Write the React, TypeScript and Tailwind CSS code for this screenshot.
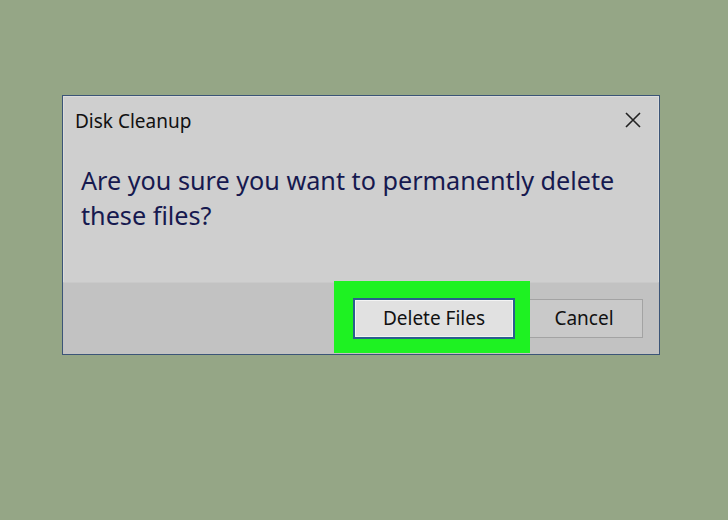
export default function App() {
  return (
    <div
      className="w-[728px] h-[520px] bg-[#95a686] pt-[95px] pl-[62px]"
      style={{ fontFamily: '"Noto Sans", "Open Sans", sans-serif' }}
    >
      <div className="w-[598px] h-[260px] border border-[#3c5577] bg-[#cfcfcf] flex flex-col shadow-[0_0_0_1px_rgba(255,255,255,0.25)_inset]">
        {/* title bar */}
        <div className="h-[49px] flex items-center justify-between pl-[12px] pr-[18px]">
          <span className="text-[19px] text-[#111] leading-none pt-[1px]">Disk Cleanup</span>
          <svg width="16" height="16" viewBox="0 0 16 16" className="mt-[-2px]">
            <path d="M1 1 L15 15 M15 1 L1 15" stroke="#222" strokeWidth="1.6" />
          </svg>
        </div>

        {/* message */}
        <div className="flex-1 pl-[18px] pt-[18px]">
          <p className="text-[25.2px] leading-[35px] text-[#16194f]">
            Are you sure you want to permanently delete
            <br />
            these files?
          </p>
        </div>

        {/* footer */}
        <div className="relative h-[72px] bg-[#c2c2c2] border-t border-[#c9c9c9] flex items-center justify-end gap-[10px] pr-[16px]">
          <div className="absolute left-[271px] top-[-2px] w-[196px] h-[72px] bg-[#1ef222] z-10" />
          <button className="relative z-20 w-[162px] h-[41px] bg-[#e1e1e1] border-2 border-[#2a5f8c] shadow-[inset_0_0_0_1px_#f4f4f4] text-[19px] text-[#111]">
            Delete Files
          </button>
          <button className="w-[118px] h-[39px] bg-[#c9c9c9] border border-[#a3a3a3] text-[19px] text-[#111]">
            Cancel
          </button>
        </div>
      </div>
    </div>
  );
}
